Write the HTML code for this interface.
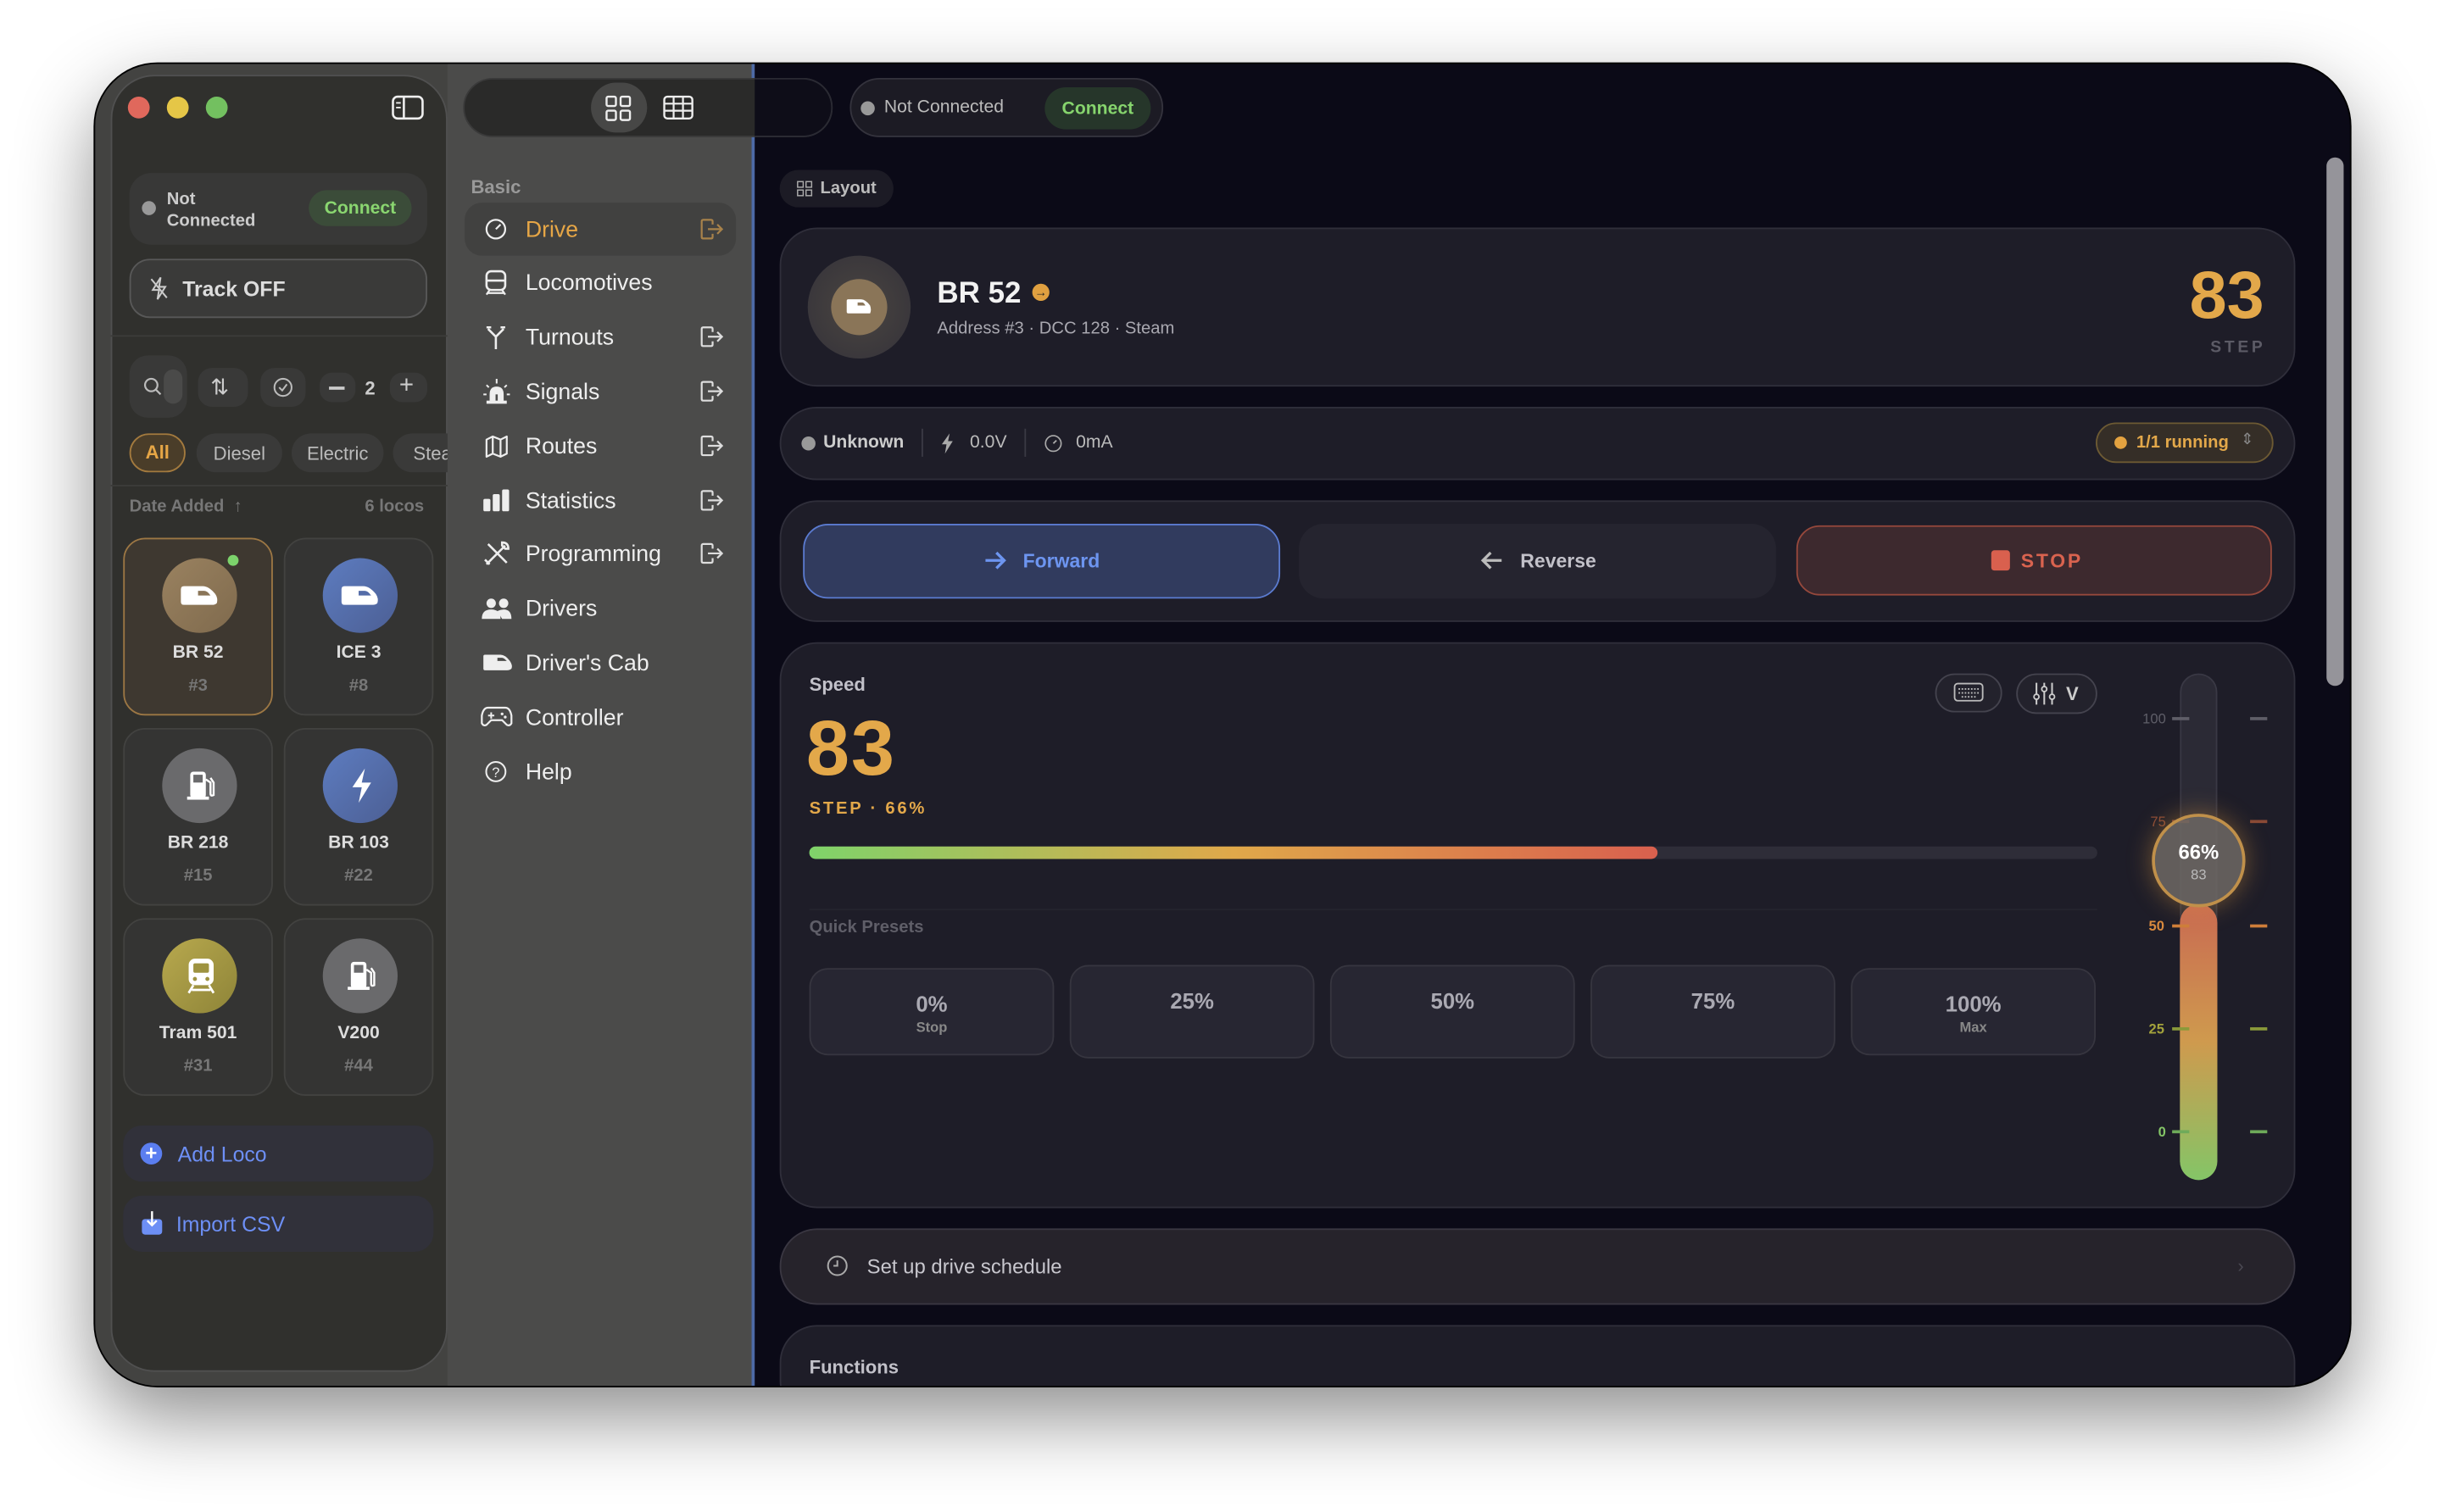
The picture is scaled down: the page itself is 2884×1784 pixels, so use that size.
<!DOCTYPE html>
<html><head><meta charset="utf-8">
<style>
*{box-sizing:border-box;margin:0;padding:0}
html,body{width:2884px;height:1784px;overflow:hidden;background:#fff;font-family:"Liberation Sans",sans-serif}
#s{position:absolute;left:0;top:0;width:1568px;height:970px;transform:scale(1.83929);transform-origin:0 0}
.a{position:absolute}
.win{left:61px;top:41px;width:1446px;height:848px;border-radius:40px;background:#0b0a17;overflow:hidden;box-shadow:0 20px 50px rgba(0,0,0,.45),0 0 0 1px #000}
.t{position:absolute;white-space:nowrap}
.card{position:absolute;background:#1e1d28;border:1px solid #2f2e3a;border-radius:24px}
svg{position:absolute;overflow:visible}
.nav{color:#eee;font-size:14.5px}
.loco{position:absolute;width:96px;height:114px;border-radius:14px;background:#343433;border:1px solid #424240}
.loco .av{position:absolute;left:24px;top:12px;width:48px;height:48px;border-radius:50%}
.loco .n{position:absolute;left:0;width:100%;top:67px;text-align:center;color:#ddd;font-weight:bold;font-size:11.5px}
.loco .h{position:absolute;left:0;width:100%;top:88px;text-align:center;color:#777;font-weight:bold;font-size:11px}
.pr{position:absolute;top:621px;height:56px;width:157px;border-radius:12px;background:#272632;border:1.5px solid #36353f;text-align:center;color:#aaa9b2;font-weight:bold;font-size:14px}
</style></head><body><div id="s">
<div class="a win">
 <div class="a" style="left:0;top:0;width:422px;height:848px;background:#434341"></div>
 <div class="a" style="left:226px;top:0;width:195px;height:848px;background:#4b4b4a"></div>
 <div class="a" style="left:421px;top:0;width:2px;height:848px;background:#4d6aa6"></div>
 <div class="a" style="left:10px;top:7px;width:216px;height:832px;border-radius:28px;background:#30302d;border:1px solid #505050"></div>
 <div class="card" style="left:439px;top:809px;width:972px;height:60px"></div>
 <div class="t" style="left:458px;top:829px;color:#c2c1c9;font-weight:bold;font-size:12px">Functions</div>
</div>
<div class="a" style="left:82px;top:62px;width:14px;height:14px;border-radius:50%;background:#e0685c"></div>
<div class="a" style="left:107px;top:62px;width:14px;height:14px;border-radius:50%;background:#e5c647"></div>
<div class="a" style="left:132px;top:62px;width:14px;height:14px;border-radius:50%;background:#73c060"></div>
<svg style="left:251px;top:61px" width="21" height="16"><rect x="1" y="1" width="19" height="14" rx="3" fill="none" stroke="#eee" stroke-width="1.4"/><line x1="8" y1="1" x2="8" y2="15" stroke="#eee" stroke-width="1.4"/><line x1="3" y1="5" x2="6" y2="5" stroke="#eee"/><line x1="3" y1="8" x2="6" y2="8" stroke="#eee"/></svg>
<div class="a" style="left:83px;top:111px;width:191px;height:46px;border-radius:14px;background:#383837"></div>
<div class="a" style="left:91px;top:129px;width:9px;height:9px;border-radius:50%;background:#999"></div>
<div class="t" style="left:107px;top:121px;color:#ccc;font-size:11px;font-weight:bold;line-height:14px">Not<br>Connected</div>
<div class="a" style="left:198px;top:122px;width:66px;height:23px;border-radius:12px;background:#3b4c39;color:#8ad670;font-weight:bold;font-size:11.5px;text-align:center;line-height:24px">Connect</div>
<div class="a" style="left:83px;top:166px;width:191px;height:38px;border-radius:13px;background:#3a3a39;border:1px solid #585858"></div>
<svg style="left:96px;top:177px" width="12" height="16"><path d="M7 1 L2 9 H6 L5 15 L10 7 H6Z" fill="none" stroke="#ccc" stroke-width="1.1"/><line x1="1" y1="2" x2="11" y2="14" stroke="#ccc" stroke-width="1.1"/></svg>
<div class="t" style="left:117px;top:178px;color:#ddd;font-weight:bold;font-size:13.5px">Track OFF</div>
<div class="a" style="left:71px;top:215px;width:216px;height:1px;background:#3c3c3a"></div>
<div class="a" style="left:83px;top:228px;width:37px;height:40px;border-radius:12px;background:#393938"></div>
<svg style="left:92px;top:242px" width="12" height="12"><circle cx="5" cy="5" r="4" fill="none" stroke="#bbb" stroke-width="1.2"/><line x1="8" y1="8" x2="11" y2="11" stroke="#bbb" stroke-width="1.2"/></svg>
<div class="a" style="left:105px;top:237px;width:12px;height:22px;border-radius:6px;background:#4a4a49"></div>
<div class="a" style="left:127px;top:236px;width:32px;height:25px;border-radius:9px;background:#393938"></div>
<div class="t" style="left:135px;top:240px;color:#ccc;font-size:14px">⇅</div>
<div class="a" style="left:167px;top:236px;width:29px;height:25px;border-radius:9px;background:#393938"></div>
<svg style="left:175px;top:242px" width="13" height="13"><circle cx="6.5" cy="6.5" r="5.5" fill="none" stroke="#bbb" stroke-width="1.1"/><path d="M4 6.5 L6 8.5 L9 4.5" fill="none" stroke="#bbb" stroke-width="1.1"/></svg>
<div class="a" style="left:205px;top:239px;width:23px;height:19px;border-radius:8px;background:#393938"></div>
<div class="a" style="left:211px;top:248px;width:10px;height:1.5px;background:#ccc"></div>
<div class="t" style="left:234px;top:242px;color:#ccc;font-weight:bold;font-size:12px">2</div>
<div class="a" style="left:250px;top:239px;width:24px;height:19px;border-radius:8px;background:#393938"></div>
<div class="t" style="left:256px;top:239px;color:#ccc;font-size:16px">+</div>
<div class="a" style="left:83px;top:278px;width:36px;height:25px;border-radius:13px;background:#4a3d29;border:1.5px solid #a37a3e;color:#e6a646;font-weight:bold;font-size:12px;text-align:center;line-height:23px">All</div>
<div class="a" style="left:126px;top:278px;width:55px;height:25px;border-radius:13px;background:#3a3a39;color:#bbb;font-size:12px;text-align:center;line-height:26px">Diesel</div>
<div class="a" style="left:187px;top:278px;width:59px;height:25px;border-radius:13px;background:#3a3a39;color:#bbb;font-size:12px;text-align:center;line-height:26px">Electric</div>
<div class="a" style="left:252px;top:278px;width:35px;height:25px;border-radius:13px 0 0 13px;background:#3a3a39;color:#bbb;font-size:12px;line-height:26px;padding-left:13px;overflow:hidden">Stea</div>
<div class="a" style="left:71px;top:311px;width:216px;height:1px;background:#3c3c3a"></div>
<div class="t" style="left:83px;top:319px;color:#777;font-weight:bold;font-size:11px">Date Added &nbsp;↑</div>
<div class="t" style="left:234px;top:319px;color:#777;font-weight:bold;font-size:11px">6 locos</div>
<div class="loco" style="left:79px;top:345px;background:#3e3830;border-color:#9c7744"><div class="av" style="background:linear-gradient(135deg,#9a8260,#7f6a4d)"></div><div class="a" style="left:66px;top:10px;width:7px;height:7px;border-radius:50%;background:#7cd36b"></div>
<svg style="left:35px;top:29px" width="26" height="14"><path d="M1 3 Q1 1 3 1 H15 Q19 1 23 6 Q25 9 24 12 Q23 13 21 13 H3 Q1 13 1 11Z" fill="#fff"/><path d="M12 4 H16 Q18 4 20 7 H12Z" fill="#8a7558"/></svg>
<div class="n">BR 52</div><div class="h">#3</div></div>
<div class="loco" style="left:182px;top:345px"><div class="av" style="background:linear-gradient(135deg,#5d7cc0,#4c5f94)"></div>
<svg style="left:35px;top:29px" width="26" height="14"><path d="M1 3 Q1 1 3 1 H15 Q19 1 23 6 Q25 9 24 12 Q23 13 21 13 H3 Q1 13 1 11Z" fill="#fff"/><path d="M12 4 H16 Q18 4 20 7 H12Z" fill="#546ca8"/></svg>
<div class="n">ICE 3</div><div class="h">#8</div></div>
<div class="loco" style="left:79px;top:467px"><div class="av" style="background:#6a6a6c"></div>
<svg style="left:40px;top:26px" width="20" height="20"><rect x="2" y="1" width="10" height="17" rx="2" fill="#fff"/><rect x="4" y="3" width="6" height="5" fill="#6a6a6c"/><rect x="0" y="17" width="14" height="2" fill="#fff"/><path d="M12 6 L15 8 V15 Q15 17 17 16 V8 L15 5" fill="none" stroke="#fff" stroke-width="1.3"/></svg>
<div class="n">BR 218</div><div class="h">#15</div></div>
<div class="loco" style="left:182px;top:467px"><div class="av" style="background:linear-gradient(135deg,#5d7cc0,#4c5f94)"></div>
<svg style="left:42px;top:25px" width="14" height="22"><path d="M9 0 L1 12 H7 L5 22 L13 9 H7Z" fill="#fff"/></svg>
<div class="n">BR 103</div><div class="h">#22</div></div>
<div class="loco" style="left:79px;top:589px"><div class="av" style="background:linear-gradient(135deg,#b8a94e,#8e8438)"></div>
<svg style="left:39px;top:24px" width="20" height="24"><rect x="2" y="1" width="16" height="17" rx="4" fill="#fff"/><rect x="5" y="4" width="10" height="6" rx="1" fill="#9e9340"/><circle cx="6" cy="14" r="1.3" fill="#9e9340"/><circle cx="14" cy="14" r="1.3" fill="#9e9340"/><path d="M5 18 L2 23 M15 18 L18 23 M4 21 H16" stroke="#fff" stroke-width="1.5"/></svg>
<div class="n">Tram 501</div><div class="h">#31</div></div>
<div class="loco" style="left:182px;top:589px"><div class="av" style="background:#6a6a6c"></div>
<svg style="left:40px;top:26px" width="20" height="20"><rect x="2" y="1" width="10" height="17" rx="2" fill="#fff"/><rect x="4" y="3" width="6" height="5" fill="#6a6a6c"/><rect x="0" y="17" width="14" height="2" fill="#fff"/><path d="M12 6 L15 8 V15 Q15 17 17 16 V8 L15 5" fill="none" stroke="#fff" stroke-width="1.3"/></svg>
<div class="n">V200</div><div class="h">#44</div></div>
<div class="a" style="left:79px;top:722px;width:199px;height:36px;border-radius:12px;background:#31313a"></div>
<div class="a" style="left:90px;top:733px;width:14px;height:14px;border-radius:50%;background:#5b7ef0;color:#fff;font-size:13px;line-height:14px;text-align:center;font-weight:bold">+</div>
<div class="t" style="left:114px;top:733px;color:#6d8ff5;font-size:13.5px">Add Loco</div>
<div class="a" style="left:79px;top:767px;width:199px;height:36px;border-radius:12px;background:#31313a"></div>
<svg style="left:91px;top:777px" width="13" height="16"><rect x="0" y="5" width="13" height="10" rx="2" fill="#6d8ff5"/><path d="M6.5 0 V9 M3.5 6 L6.5 9 L9.5 6" fill="none" stroke="#fff" stroke-width="1.3"/></svg>
<div class="t" style="left:113px;top:778px;color:#6d8ff5;font-size:13.5px">Import CSV</div>

<div class="a" style="left:297px;top:50px;width:237px;height:38px;border-radius:19px;background:#2a2a29;border:1px solid #3a3a3a"></div>
<div class="a" style="left:379px;top:53px;width:36px;height:32px;border-radius:16px;background:#474746"></div>
<svg style="left:388px;top:61px" width="17" height="17"><rect x="1" y="1" width="6" height="6" rx="1" fill="none" stroke="#eee" stroke-width="1.3"/><rect x="10" y="1" width="6" height="6" rx="1" fill="none" stroke="#eee" stroke-width="1.3"/><rect x="1" y="10" width="6" height="6" rx="1" fill="none" stroke="#eee" stroke-width="1.3"/><rect x="10" y="10" width="6" height="6" rx="1" fill="none" stroke="#eee" stroke-width="1.3"/></svg>
<svg style="left:425px;top:61px" width="20" height="16"><rect x="1" y="1" width="18" height="14" rx="2" fill="none" stroke="#eee" stroke-width="1.3"/><path d="M1 5.5 H19 M1 10 H19 M7 1 V15 M13 1 V15" stroke="#eee" stroke-width="1.2"/></svg>
<div class="t" style="left:302px;top:113px;color:#999;font-weight:bold;font-size:12px">Basic</div>
<div class="a" style="left:298px;top:130px;width:174px;height:34px;border-radius:11px;background:#414140"></div>
<svg style="left:311px;top:140px" width="14" height="14"><circle cx="7" cy="7" r="6" fill="none" stroke="#eee" stroke-width="1.2"/><line x1="7" y1="7" x2="10" y2="4" stroke="#eee" stroke-width="1.2"/></svg>
<div class="t nav" style="left:337px;top:140px;color:#e6a646">Drive</div>
<svg style="left:449px;top:140px" width="15" height="14"><path d="M7 1 H2 Q1 1 1 2 V12 Q1 13 2 13 H7 Q8 13 8 12 V10 M8 4 V2 Q8 1 7 1 M5 7 H14 M11 4 L14 7 L11 10" fill="none" stroke="#a8824a" stroke-width="1.2"/></svg>
<svg style="left:311px;top:173px" width="14" height="17"><rect x="1" y="1" width="12" height="12" rx="3" fill="none" stroke="#eee" stroke-width="1.4"/><line x1="1" y1="7" x2="13" y2="7" stroke="#eee" stroke-width="1.4"/><path d="M3 13 L1 16 M11 13 L13 16 M2 15 H12" stroke="#eee" stroke-width="1.2"/></svg>
<div class="t nav" style="left:337px;top:174px">Locomotives</div>
<svg style="left:311px;top:209px" width="14" height="15"><path d="M7 15 V7 L2 2 M7 7 L12 2 M1 1 H4 M10 1 H13" fill="none" stroke="#eee" stroke-width="1.4"/></svg>
<div class="t nav" style="left:337px;top:209px">Turnouts</div>
<svg style="left:449px;top:209px" width="15" height="14"><path d="M7 1 H2 Q1 1 1 2 V12 Q1 13 2 13 H7 Q8 13 8 12 V10 M8 4 V2 Q8 1 7 1 M5 7 H14 M11 4 L14 7 L11 10" fill="none" stroke="#ddd" stroke-width="1.2"/></svg>
<svg style="left:310px;top:243px" width="17" height="16"><path d="M4 15 V10 Q4 5 8.5 5 Q13 5 13 10 V15Z" fill="#eee"/><rect x="2" y="14" width="13" height="2" fill="#eee"/><path d="M8.5 0 V3 M2 4 L3.5 5.5 M15 4 L13.5 5.5 M0 10 H2 M15 10 H17" stroke="#eee" stroke-width="1.1"/><rect x="7.8" y="10" width="1.4" height="4" fill="#4b4b4a"/></svg>
<div class="t nav" style="left:337px;top:244px">Signals</div>
<svg style="left:449px;top:244px" width="15" height="14"><path d="M7 1 H2 Q1 1 1 2 V12 Q1 13 2 13 H7 Q8 13 8 12 V10 M8 4 V2 Q8 1 7 1 M5 7 H14 M11 4 L14 7 L11 10" fill="none" stroke="#ddd" stroke-width="1.2"/></svg>
<svg style="left:311px;top:279px" width="15" height="15"><path d="M1 3 L5 1 L10 3 L14 1 V12 L10 14 L5 12 L1 14Z M5 1 V12 M10 3 V14" fill="none" stroke="#eee" stroke-width="1.2" stroke-linejoin="round"/></svg>
<div class="t nav" style="left:337px;top:279px">Routes</div>
<svg style="left:449px;top:279px" width="15" height="14"><path d="M7 1 H2 Q1 1 1 2 V12 Q1 13 2 13 H7 Q8 13 8 12 V10 M8 4 V2 Q8 1 7 1 M5 7 H14 M11 4 L14 7 L11 10" fill="none" stroke="#ddd" stroke-width="1.2"/></svg>
<svg style="left:310px;top:314px" width="17" height="14"><rect x="0" y="6" width="4.5" height="8" rx="1" fill="#eee"/><rect x="6" y="3" width="4.5" height="11" rx="1" fill="#eee"/><rect x="12" y="0" width="4.5" height="14" rx="1" fill="#eee"/></svg>
<div class="t nav" style="left:337px;top:314px">Statistics</div>
<svg style="left:449px;top:314px" width="15" height="14"><path d="M7 1 H2 Q1 1 1 2 V12 Q1 13 2 13 H7 Q8 13 8 12 V10 M8 4 V2 Q8 1 7 1 M5 7 H14 M11 4 L14 7 L11 10" fill="none" stroke="#ddd" stroke-width="1.2"/></svg>
<svg style="left:310px;top:347px" width="17" height="17"><path d="M2 15 L14 3 M3 2 L15 14 M12 1 Q16 1 16 5 L14 5 L12 3Z M1 12 L4 15" fill="none" stroke="#eee" stroke-width="1.4"/></svg>
<div class="t nav" style="left:337px;top:348px">Programming</div>
<svg style="left:449px;top:348px" width="15" height="14"><path d="M7 1 H2 Q1 1 1 2 V12 Q1 13 2 13 H7 Q8 13 8 12 V10 M8 4 V2 Q8 1 7 1 M5 7 H14 M11 4 L14 7 L11 10" fill="none" stroke="#ddd" stroke-width="1.2"/></svg>
<svg style="left:309px;top:383px" width="19" height="14"><circle cx="6" cy="4" r="3" fill="#eee"/><circle cx="14" cy="4" r="3" fill="#eee"/><path d="M0 14 Q0 8 6 8 Q12 8 12 14Z M10 9 Q12 8 14 8 Q19 8 19 14 H13" fill="#eee"/></svg>
<div class="t nav" style="left:337px;top:383px">Drivers</div>
<svg style="left:309px;top:419px" width="20" height="12"><path d="M1 2 Q1 1 2 1 H12 Q15 1 18 5 Q20 8 19 10 Q18 11 16 11 H2 Q1 11 1 10Z" fill="#eee"/><path d="M10 3 H13 Q14 3 16 5 H10Z" fill="#4b4b4a"/></svg>
<div class="t nav" style="left:337px;top:418px">Driver's Cab</div>
<svg style="left:308px;top:453px" width="21" height="14"><path d="M5 1 H16 Q19 1 20 6 L20 11 Q19 13 17 12 L14 9 H7 L4 12 Q2 13 1 11 L1 6 Q2 1 5 1Z" fill="none" stroke="#eee" stroke-width="1.2"/><path d="M5 6 H9 M7 4 V8" stroke="#eee" stroke-width="1.1"/><circle cx="14" cy="5" r=".9" fill="#eee"/><circle cx="16" cy="7" r=".9" fill="#eee"/></svg>
<div class="t nav" style="left:337px;top:453px">Controller</div>
<svg style="left:311px;top:488px" width="14" height="14"><circle cx="7" cy="7" r="6.2" fill="none" stroke="#eee" stroke-width="1.1"/><text x="7" y="10.5" font-size="9" fill="#eee" text-anchor="middle" font-family="Liberation Sans">?</text></svg>
<div class="t nav" style="left:337px;top:488px">Help</div>

<div class="a" style="left:484px;top:50px;width:50px;height:38px;border-radius:0 19px 19px 0;border:1px solid #2a2a33;border-left:none;background:#0e0d18"></div>
<div class="a" style="left:545px;top:50px;width:201px;height:38px;border-radius:19px;background:#1c1b24;border:1px solid #34333d"></div>
<div class="a" style="left:552px;top:65px;width:9px;height:9px;border-radius:50%;background:#999"></div>
<div class="t" style="left:567px;top:63px;color:#bbb;font-size:11.5px">Not Connected</div>
<div class="a" style="left:670px;top:56px;width:68px;height:27px;border-radius:14px;background:#26362a;color:#86d46d;font-weight:bold;font-size:11.5px;text-align:center;line-height:28px">Connect</div>
<div class="a" style="left:500px;top:109px;width:73px;height:24px;border-radius:12px;background:#1c1b25"></div>
<svg style="left:511px;top:116px" width="10" height="10"><rect x=".5" y=".5" width="3.6" height="3.6" fill="none" stroke="#aaa" stroke-width=".8"/><rect x="5.9" y=".5" width="3.6" height="3.6" fill="none" stroke="#aaa" stroke-width=".8"/><rect x=".5" y="5.9" width="3.6" height="3.6" fill="none" stroke="#aaa" stroke-width=".8"/><rect x="5.9" y="5.9" width="3.6" height="3.6" fill="none" stroke="#aaa" stroke-width=".8"/></svg>
<div class="t" style="left:526px;top:115px;color:#bbb;font-weight:bold;font-size:11px">Layout</div>

<div class="card" style="left:500px;top:146px;width:972px;height:102px"></div>
<div class="a" style="left:518px;top:164px;width:66px;height:66px;border-radius:50%;background:radial-gradient(#4a4540,#34323a)"></div>
<div class="a" style="left:533px;top:179px;width:36px;height:36px;border-radius:50%;background:#8a7558"></div>
<svg style="left:542px;top:191px" width="18" height="11"><path d="M1 2 Q1 1 2 1 H10 Q13 1 16 5 Q17 8 16 10 H2 Q1 10 1 9Z" fill="#fff"/><path d="M8 3 H11 Q12 3 13 5 H8Z" fill="#8a7558"/></svg>
<div class="t" style="left:601px;top:178px;color:#f2f2f2;font-weight:bold;font-size:19px">BR 52</div>
<div class="a" style="left:662px;top:182px;width:11px;height:11px;border-radius:50%;background:#e0a040;color:#222;font-size:8px;line-height:11px;text-align:center;font-weight:bold">→</div>
<div class="t" style="left:601px;top:205px;color:#a9a8b0;font-size:11px">Address #3 · DCC 128 · Steam</div>
<div class="t" style="left:1370px;top:166px;width:82px;text-align:right;color:#e3a84a;font-weight:bold;font-size:43px">83</div>
<div class="t" style="left:1400px;top:217px;width:53px;text-align:right;color:#5c5b66;font-weight:bold;font-size:10.5px;letter-spacing:2px">STEP</div>

<div class="card" style="left:500px;top:261px;width:972px;height:47px"></div>
<div class="a" style="left:514px;top:280px;width:9px;height:9px;border-radius:50%;background:#999"></div>
<div class="t" style="left:528px;top:278px;color:#ccc;font-weight:bold;font-size:11.5px">Unknown</div>
<div class="a" style="left:591px;top:275px;width:1px;height:18px;background:#3a3944"></div>
<svg style="left:603px;top:278px" width="8" height="13"><path d="M6 0 L1 7 H4 L3 13 L8 5 H5Z" fill="#aaa"/></svg>
<div class="t" style="left:622px;top:278px;color:#bbb;font-size:11.5px">0.0V</div>
<div class="a" style="left:657px;top:275px;width:1px;height:18px;background:#3a3944"></div>
<svg style="left:670px;top:279px" width="11" height="11"><circle cx="5.5" cy="5.5" r="5" fill="none" stroke="#aaa" stroke-width=".9"/><line x1="5.5" y1="5.5" x2="7.5" y2="3.5" stroke="#aaa"/></svg>
<div class="t" style="left:690px;top:278px;color:#bbb;font-size:11.5px">0mA</div>
<div class="a" style="left:1344px;top:271px;width:114px;height:26px;border-radius:13px;background:#352e27;border:1px solid #6d5a33"></div>
<div class="a" style="left:1356px;top:280px;width:8px;height:8px;border-radius:50%;background:#e3a240"></div>
<div class="t" style="left:1370px;top:278px;color:#e3a84a;font-weight:bold;font-size:11px">1/1 running</div>
<div class="t" style="left:1437px;top:277px;color:#888;font-size:10px">⇕</div>

<div class="card" style="left:500px;top:321px;width:972px;height:78px"></div>
<div class="a" style="left:515px;top:336px;width:306px;height:48px;border-radius:16px;background:#313b5e;border:1.5px solid #5b7bd0"></div>
<svg style="left:631px;top:353px" width="15" height="13"><path d="M1 6.5 H13 M8 1.5 L13 6.5 L8 11.5" fill="none" stroke="#6d95f0" stroke-width="1.8"/></svg>
<div class="t" style="left:656px;top:353px;color:#6d95f0;font-weight:bold;font-size:12.5px">Forward</div>
<div class="a" style="left:833px;top:336px;width:306px;height:48px;border-radius:16px;background:#25242f"></div>
<svg style="left:949px;top:353px" width="15" height="13"><path d="M14 6.5 H2 M7 1.5 L2 6.5 L7 11.5" fill="none" stroke="#bbb" stroke-width="1.8"/></svg>
<div class="t" style="left:975px;top:353px;color:#c2c1c9;font-weight:bold;font-size:12.5px">Reverse</div>
<div class="a" style="left:1152px;top:337px;width:305px;height:45px;border-radius:15px;background:#3d292e;border:1.5px solid #96483c"></div>
<div class="a" style="left:1277px;top:353px;width:12px;height:13px;border-radius:2px;background:#d9604e"></div>
<div class="t" style="left:1296px;top:353px;color:#d9634f;font-weight:bold;font-size:12.5px;letter-spacing:1.5px">STOP</div>

<div class="card" style="left:500px;top:412px;width:972px;height:363px"></div>
<div class="t" style="left:519px;top:432px;color:#c2c1c9;font-weight:bold;font-size:12px">Speed</div>
<div class="t" style="left:517px;top:451px;color:#e3a84a;font-weight:bold;font-size:50px;letter-spacing:1px">83</div>
<div class="t" style="left:519px;top:513px;color:#e3a84a;font-weight:bold;font-size:11px;letter-spacing:1.5px">STEP · 66%</div>
<div class="a" style="left:519px;top:543px;width:826px;height:8px;border-radius:4px;background:#2e2d38"></div>
<div class="a" style="left:519px;top:543px;width:544px;height:8px;border-radius:4px;background:linear-gradient(90deg,#7fd36a,#e0a84a 50%,#d9604e)"></div>
<div class="a" style="left:519px;top:583px;width:826px;height:1px;background:#25242e"></div>
<div class="t" style="left:519px;top:589px;color:#5f5e68;font-weight:bold;font-size:11px">Quick Presets</div>
<div class="pr" style="left:519px;top:621px;height:56px;padding-top:14px">0%<div style="font-size:9px;color:#888;margin-top:2px">Stop</div></div>
<div class="pr" style="left:686px;top:619px;height:60px;padding-top:14px">25%</div>
<div class="pr" style="left:853px;top:619px;height:60px;padding-top:14px">50%</div>
<div class="pr" style="left:1020px;top:619px;height:60px;padding-top:14px">75%</div>
<div class="pr" style="left:1187px;top:621px;height:56px;padding-top:14px">100%<div style="font-size:9px;color:#888;margin-top:2px">Max</div></div>
<div class="a" style="left:1241px;top:432px;width:43px;height:25px;border-radius:13px;border:1px solid #44434e;background:#23222c"></div>
<svg style="left:1253px;top:438px" width="19" height="12"><rect x=".5" y=".5" width="18" height="11" rx="2" fill="none" stroke="#bbb"/><path d="M3 4 H16 M3 6.5 H16 M5 9 H14" stroke="#bbb" stroke-dasharray="1 1"/></svg>
<div class="a" style="left:1293px;top:432px;width:52px;height:26px;border-radius:13px;border:1px solid #44434e;background:#23222c"></div>
<svg style="left:1304px;top:437px" width="14" height="16"><path d="M2 1 V15 M7 1 V15 M12 1 V15" stroke="#ccc" stroke-width="1.1"/><circle cx="2" cy="10" r="1.6" fill="#23222c" stroke="#ccc"/><circle cx="7" cy="5" r="1.6" fill="#23222c" stroke="#ccc"/><circle cx="12" cy="10" r="1.6" fill="#23222c" stroke="#ccc"/></svg>
<div class="t" style="left:1325px;top:438px;color:#ccc;font-weight:bold;font-size:12px">V</div>
<div class="a" style="left:1398px;top:432px;width:24px;height:325px;border-radius:12px;background:#2b2a35;border:1px solid #393844"></div>
<div class="a" style="left:1398px;top:580px;width:24px;height:177px;border-radius:12px;background:linear-gradient(#c96a52,#cf9a4e 50%,#84c567)"></div>
<div class="t" style="left:1374px;top:456px;color:#5f5e68;font-size:9px">100</div>
<div class="t" style="left:1379px;top:522px;color:#8a4a36;font-size:9px">75</div>
<div class="t" style="left:1378px;top:589px;color:#d98a3e;font-weight:bold;font-size:9px">50</div>
<div class="t" style="left:1378px;top:655px;color:#a3a23c;font-weight:bold;font-size:9px">25</div>
<div class="t" style="left:1384px;top:721px;color:#84c567;font-weight:bold;font-size:9px">0</div>
<div class="a" style="left:1393px;top:460px;width:11px;height:1.5px;background:#5f5e68"></div>
<div class="a" style="left:1443px;top:460px;width:11px;height:1.5px;background:#5f5e68"></div>
<div class="a" style="left:1393px;top:526px;width:11px;height:1.5px;background:#8a4a36"></div>
<div class="a" style="left:1443px;top:526px;width:11px;height:1.5px;background:#8a4a36"></div>
<div class="a" style="left:1393px;top:593px;width:11px;height:1.5px;background:#cf7e3a"></div>
<div class="a" style="left:1443px;top:593px;width:11px;height:1.5px;background:#cf7e3a"></div>
<div class="a" style="left:1393px;top:659px;width:11px;height:1.5px;background:#8a9a3a"></div>
<div class="a" style="left:1443px;top:659px;width:11px;height:1.5px;background:#8a9a3a"></div>
<div class="a" style="left:1393px;top:725px;width:11px;height:1.5px;background:#6eaa5a"></div>
<div class="a" style="left:1443px;top:725px;width:11px;height:1.5px;background:#6eaa5a"></div>
<div class="a" style="left:1380px;top:522px;width:60px;height:60px;border-radius:50%;background:rgba(110,104,100,.85);border:2.5px solid #c0904a;box-shadow:0 0 16px rgba(220,150,60,.45);text-align:center;color:#fff;font-weight:bold;font-size:13px;padding-top:15px">66%<div style="font-size:9px;color:#bbb;font-weight:normal;margin-top:2px">83</div></div>

<div class="a" style="left:500px;top:788px;width:972px;height:49px;border-radius:24px;background:#26232b;border:1px solid #3a3742"></div>
<svg style="left:530px;top:805px" width="14" height="14"><circle cx="7" cy="7" r="6" fill="none" stroke="#aaa" stroke-width="1.1"/><path d="M7 3.5 V7 H4.5" fill="none" stroke="#aaa" stroke-width="1.1"/></svg>
<div class="t" style="left:556px;top:805px;color:#c8c7ce;font-size:13px">Set up drive schedule</div>
<div class="t" style="left:1435px;top:805px;color:#4a4852;font-size:12px">›</div>
<div class="a" style="left:1492px;top:101px;width:11px;height:339px;border-radius:6px;background:#95949a"></div>
</div>
</body></html>
